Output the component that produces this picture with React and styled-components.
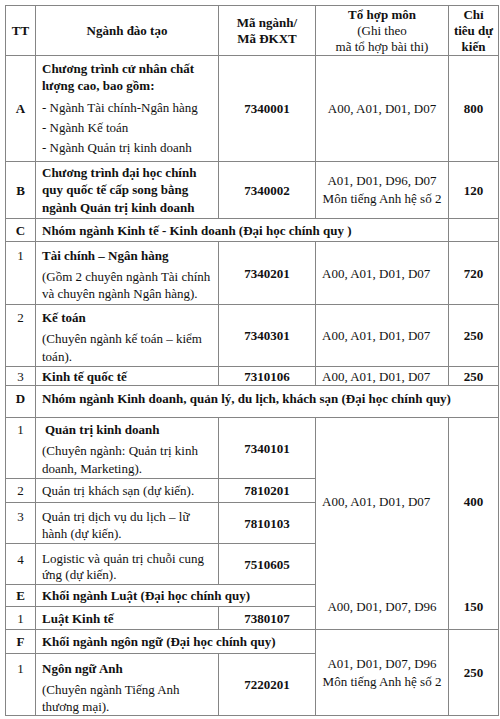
import React from "react";
import styled, { createGlobalStyle, css } from "styled-components";

const GlobalStyle = createGlobalStyle`
  html, body {
    margin: 0;
    padding: 0;
    background: #fff;
  }
  table, td {
    font-family: "Liberation Serif", "Times New Roman", serif;
  }
`;

const Page = styled.div`
  padding: 5px 0 0 5px;
`;

const Table = styled.table`
  width: 493px;
  border-collapse: collapse;
  table-layout: fixed;
  font-size: 13px;
  color: #111;
`;

const Row = styled.tr`
  height: ${({ $h }) => $h}px;
`;

const Cell = styled.td`
  border: 1px solid #858585;
  padding: 0 6px;
  font-size: 13px;
  line-height: 17px;
  vertical-align: middle;
  overflow: hidden;
  text-align: ${({ $align }) => $align || "left"};
  font-weight: ${({ $bold }) => ($bold ? 700 : 400)};
  ${({ $pt }) =>
    $pt !== undefined &&
    css`
      vertical-align: top;
      padding-top: ${$pt}px;
    `}
  ${({ $noBottom }) =>
    $noBottom &&
    css`
      border-bottom: none;
    `}
  ${({ $noTop }) =>
    $noTop &&
    css`
      border-top: none;
    `}
`;

const HeadCell = styled(Cell)`
  text-align: center;
  font-weight: 700;
  line-height: 16px;
  padding: 0 4px;
`;

const Num = styled(Cell)`
  text-align: center;
  padding-left: 2px;
  padding-right: 2px;
`;

const Normal = styled.span`
  font-weight: 400;
`;

const Title = styled.div`
  font-weight: 700;
  line-height: ${({ $lh }) => $lh || 17}px;
  padding-left: ${({ $indent }) => $indent || 0}px;
`;

const Sub = styled.div`
  margin-top: ${({ $gap }) => ($gap === undefined ? 4 : $gap)}px;
  line-height: ${({ $lh }) => $lh || 18}px;
`;

const Bullets = styled.div`
  margin-top: 4px;
  line-height: 20px;
`;

const Lines = styled.div`
  line-height: ${({ $lh }) => $lh || 18}px;
`;

function App() {
  return (
    <Page>
      <GlobalStyle />
      <Table>
        <colgroup>
          <col style={{ width: 30 }} />
          <col style={{ width: 183 }} />
          <col style={{ width: 97 }} />
          <col style={{ width: 133 }} />
          <col style={{ width: 50 }} />
        </colgroup>
        <tbody>
          <Row $h={50}>
            <HeadCell>TT</HeadCell>
            <HeadCell>Ngành đào tạo</HeadCell>
            <HeadCell>
              Mã ngành/
              <br />
              Mã ĐKXT
            </HeadCell>
            <HeadCell>
              Tổ hợp môn
              <br />
              <Normal>
                (Ghi theo
                <br />
                mã tổ hợp bài thi)
              </Normal>
            </HeadCell>
            <HeadCell>
              Chỉ
              <br />
              tiêu dự
              <br />
              kiến
            </HeadCell>
          </Row>

          <Row $h={106}>
            <Num $bold>A</Num>
            <Cell>
              <Title>
                Chương trình cử nhân chất
                <br />
                lượng cao, bao gồm:
              </Title>
              <Bullets>
                - Ngành Tài chính-Ngân hàng
                <br />
                - Ngành Kế toán
                <br />- Ngành Quản trị kinh doanh
              </Bullets>
            </Cell>
            <Cell $align="center" $bold>7340001</Cell>
            <Cell $align="center">A00, A01, D01, D07</Cell>
            <Cell $align="center" $bold>800</Cell>
          </Row>

          <Row $h={57}>
            <Num $bold>B</Num>
            <Cell>
              <Title $lh={17.5}>
                Chương trình đại học chính
                <br />
                quy quốc tế cấp song bằng
                <br />
                ngành Quản trị kinh doanh
              </Title>
            </Cell>
            <Cell $align="center" $bold>7340002</Cell>
            <Cell $align="center">
              <Lines>
                A01, D01, D96, D07
                <br />
                Môn tiếng Anh hệ số 2
              </Lines>
            </Cell>
            <Cell $align="center" $bold>120</Cell>
          </Row>

          <Row $h={23}>
            <Num $bold>C</Num>
            <Cell colSpan={3} $bold>
              Nhóm ngành Kinh tế - Kinh doanh (Đại học chính quy )
            </Cell>
            <Cell />
          </Row>

          <Row $h={63}>
            <Num $pt={5}>1</Num>
            <Cell $pt={5}>
              <Title>Tài chính – Ngân hàng</Title>
              <Sub $lh={17}>
                (Gồm 2 chuyên ngành Tài chính
                <br />
                và chuyên ngành Ngân hàng).
              </Sub>
            </Cell>
            <Cell $align="center" $bold>7340201</Cell>
            <Cell>A00, A01, D01, D07</Cell>
            <Cell $align="center" $bold>720</Cell>
          </Row>

          <Row $h={62}>
            <Num $pt={4}>2</Num>
            <Cell $pt={4}>
              <Title>Kế toán</Title>
              <Sub>
                (Chuyên ngành kế toán – kiểm
                <br />
                toán).
              </Sub>
            </Cell>
            <Cell $align="center" $bold>7340301</Cell>
            <Cell>A00, A01, D01, D07</Cell>
            <Cell $align="center" $bold>250</Cell>
          </Row>

          <Row $h={19}>
            <Num>3</Num>
            <Cell $bold>Kinh tế quốc tế</Cell>
            <Cell $align="center" $bold>7310106</Cell>
            <Cell>A00, A01, D01, D07</Cell>
            <Cell $align="center" $bold>250</Cell>
          </Row>

          <Row $h={32}>
            <Num $bold $pt={4}>D</Num>
            <Cell colSpan={4} $bold $pt={4}>
              Nhóm ngành Kinh doanh, quản lý, du lịch, khách sạn (Đại học chính quy)
            </Cell>
          </Row>

          <Row $h={61}>
            <Num $pt={3}>1</Num>
            <Cell $pt={3}>
              <Title $indent={3}>Quản trị kinh doanh</Title>
              <Sub>
                (Chuyên ngành: Quản trị kinh
                <br />
                doanh, Marketing).
              </Sub>
            </Cell>
            <Cell $align="center" $bold>7340101</Cell>
            <Cell rowSpan={4} $noBottom>A00, A01, D01, D07</Cell>
            <Cell rowSpan={4} $noBottom $align="center" $bold>400</Cell>
          </Row>

          <Row $h={24}>
            <Num>2</Num>
            <Cell>Quản trị khách sạn (dự kiến).</Cell>
            <Cell $align="center" $bold>7810201</Cell>
          </Row>

          <Row $h={41}>
            <Num $pt={5}>3</Num>
            <Cell $pt={5}>
              <Lines $lh={17}>
                Quản trị dịch vụ du lịch – lữ
                <br />
                hành (dự kiến).
              </Lines>
            </Cell>
            <Cell $align="center" $bold>7810103</Cell>
          </Row>

          <Row $h={41}>
            <Num $pt={7}>4</Num>
            <Cell $pt={7}>
              <Lines $lh={16}>
                Logistic và quản trị chuỗi cung
                <br />
                ứng (dự kiến).
              </Lines>
            </Cell>
            <Cell $align="center" $bold>7510605</Cell>
          </Row>

          <Row $h={22}>
            <Num $bold>E</Num>
            <Cell colSpan={2} $bold>Khối ngành Luật (Đại học chính quy)</Cell>
            <Cell rowSpan={2} $noTop $align="center">A00, D01, D07, D96</Cell>
            <Cell rowSpan={2} $noTop $align="center" $bold>150</Cell>
          </Row>

          <Row $h={23}>
            <Num>1</Num>
            <Cell $bold>Luật Kinh tế</Cell>
            <Cell $align="center" $bold>7380107</Cell>
          </Row>

          <Row $h={24}>
            <Num $bold>F</Num>
            <Cell colSpan={2} $bold>Khối ngành ngôn ngữ (Đại học chính quy)</Cell>
            <Cell rowSpan={2} $align="center">
              <Lines>
                A01, D01, D07, D96
                <br />
                Môn tiếng Anh hệ số 2
              </Lines>
            </Cell>
            <Cell rowSpan={2} $align="center" $bold>250</Cell>
          </Row>

          <Row $h={62}>
            <Num $pt={6}>1</Num>
            <Cell $pt={6}>
              <Title>Ngôn ngữ Anh</Title>
              <Sub $lh={17}>
                (Chuyên ngành Tiếng Anh
                <br />
                thương mại).
              </Sub>
            </Cell>
            <Cell $align="center" $bold>7220201</Cell>
          </Row>
        </tbody>
      </Table>
    </Page>
  );
}

export default App;
